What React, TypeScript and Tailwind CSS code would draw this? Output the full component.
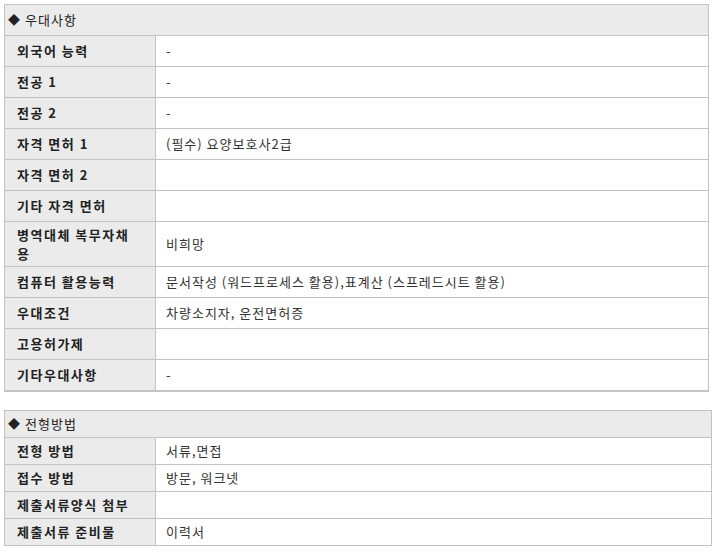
import React from "react";

// Job posting detail tables (우대사항 / 전형방법)
type Row = { label: React.ReactNode; value?: string; tall?: boolean };

const preferRows: Row[] = [
    { label: "외국어 능력", value: "-" },
    { label: "전공 1", value: "-" },
    { label: "전공 2", value: "-" },
    { label: "자격 면허 1", value: "(필수) 요양보호사2급" },
    { label: "자격 면허 2" },
    { label: "기타 자격 면허" },
    { label: <>병역대체 복무자채<br />용</>, value: "비희망", tall: true },
    { label: "컴퓨터 활용능력", value: "문서작성 (워드프로세스 활용),표계산 (스프레드시트 활용)" },
    { label: "우대조건", value: "차량소지자, 운전면허증" },
    { label: "고용허가제" },
    { label: "기타우대사항", value: "-" },
];

const selectRows: Row[] = [
    { label: "전형 방법", value: "서류,면접" },
    { label: "접수 방법", value: "방문, 워크넷" },
    { label: "제출서류양식 첨부" },
    { label: "제출서류 준비물", value: "이력서" },
];

const font = "font-['Malgun_Gothic','Noto_Sans_CJK_KR','Noto_Sans',sans-serif]";

const Section: React.FC<{ title: string; rows: Row[]; compact?: boolean; className: string }> = ({
    title,
    rows,
    compact,
    className,
}) => {
    const rowH = compact ? "h-[26px]" : "h-[30px]";
    return (
        <div className={`border-[#c3c3c3] ${className}`}>
            <div className={`flex items-center bg-[#ebebeb] pl-[3px] text-[13px] tracking-[1px] text-[#222] ${rowH}`}>
                <span className="mr-[4px] text-[12px]">◆</span>
                <span>{title}</span>
            </div>
            {rows.map((r, i) => (
                <div key={i} className="flex border-t border-[#c3c3c3]">
                    <div
                        className={`flex w-[151px] shrink-0 items-center border-r border-[#c3c3c3] bg-[#ebebeb] pl-[12px] text-[13px] font-bold tracking-[1.5px] text-[#222] ${
                            r.tall ? "h-[44px] leading-[19px]" : rowH
                        }`}
                    >
                        <span>{r.label}</span>
                    </div>
                    <div className="flex flex-1 items-center bg-white pl-[10px] text-[13px] tracking-[1px] text-[#333]">
                        {r.value}
                    </div>
                </div>
            ))}
        </div>
    );
};

export default function App() {
    return (
        <div className={`min-h-[553px] w-[717px] bg-white pl-[4px] pt-[4px] ${font}`}>
            <Section
                title="우대사항"
                rows={preferRows}
                className="w-[705px] border-t border-l border-r border-b-2"
            />
            <Section
                title="전형방법"
                rows={selectRows}
                compact
                className="mt-[18px] w-[708px] border"
            />
        </div>
    );
}
